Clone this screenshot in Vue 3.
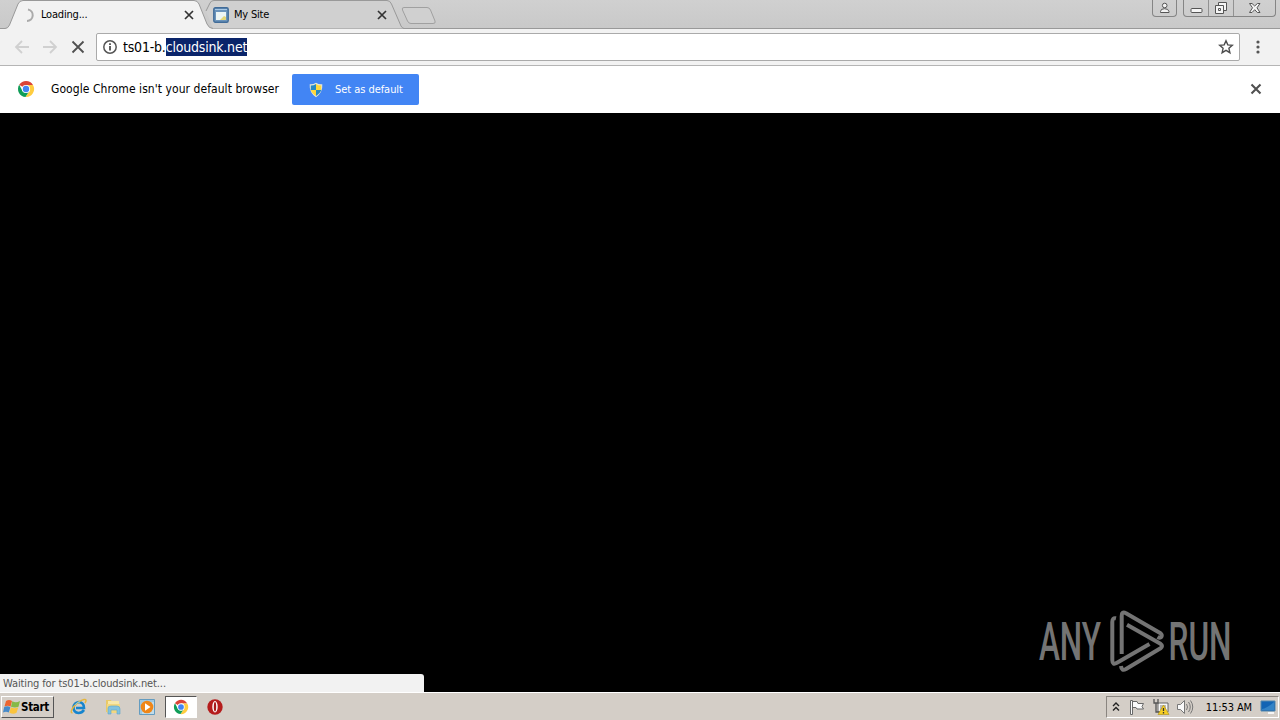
<template>
  <div class="desktop">
    <header class="tab-strip">
      <div class="tabs">
        <div class="tab active">
          <svg class="tab-shape" width="210" height="29" viewBox="0 0 210 29">
            <path d="M0 28.5H2Q5 28.5 6.5 25L15 4Q16.500 .5 20 .5H191Q194.500 .5 196 4L204 24Q206 28.500 210 28.500V29H0Z" fill="#f2f2f2" />
            <path d="M0 28.5H2Q5 28.5 6.500 25L15 4Q16.500 .5 20 .5H191Q194.500 .5 196 4L204 24Q206 28.500 210 28.500" fill="none" stroke="#999" />
          </svg>
          <svg class="tab-icon" width="16" height="16" viewBox="0 0 16 16">
            <path d="M8 2.500A5.800 5.800 0 0 1 7 14" fill="none" stroke="#aaa" stroke-width="2" />
          </svg>
          <span class="tab-title">Loading...</span>
          <svg class="tab-close" width="10" height="10" viewBox="0 0 10 10"><path d="M1 1L9 9M9 1L1 9" stroke="#333" stroke-width="1.700" /></svg>
        </div>
        <div class="tab">
          <svg class="tab-shape" width="210" height="29" viewBox="0 0 210 29">
            <path d="M7 11L11 3Q12 .5 15 .5H188Q191 .5 192.500 4L202 26Q203 28 205 28.500H14Z" fill="#d0d0d0" />
            <path d="M7 11L11 3Q12 .5 15 .5H188Q191 .5 192.500 4L202 26Q203 28 205 28.500" fill="none" stroke="#999" />
          </svg>
          <svg class="tab-icon" width="16" height="16" viewBox="0 0 16 16">
            <rect x=".8" y=".8" width="14.400" height="14.400" rx="1.500" fill="#6c94bb" stroke="#416c99" stroke-width="1.400" />
            <path d="M2 2.500H14" stroke="#a9c9e6" />
            <rect x="3" y="5" width="10" height="8" fill="#edf5f4" />
            <path d="M7 13L11 9L13 10V13Z" fill="#e5d778" />
          </svg>
          <span class="tab-title">My Site</span>
          <svg class="tab-close" width="10" height="10" viewBox="0 0 10 10"><path d="M1 1L9 9M9 1L1 9" stroke="#333" stroke-width="1.700" /></svg>
        </div>
        <svg class="new-tab" width="36" height="20" viewBox="0 0 36 20">
          <path d="M3 1.500H26Q28.500 1.500 29.500 4L34 15Q35 17.500 32 17.500H10Q7.500 17.500 6.500 15L1.500 4Q.5 1.500 3 1.500Z" fill="#d0d0d0" stroke="#a0a0a0" />
        </svg>
      </div>
      <div class="window-controls">
        <div class="control profile">
          <svg width="12" height="12" viewBox="0 0 12 12" fill="#f3f3f3" stroke="#555">
            <path d="M1.500 9.500Q1.500 6.700 5.500 6.700T10 9.500V10.500H1.500Z" /><circle cx="5.700" cy="3.500" r="2.300" />
          </svg>
        </div>
        <div class="control-group">
          <div class="control minimize">
            <svg width="13" height="12"><rect x="1" y="6.500" width="11" height="4" rx="1" fill="#f5f5f5" stroke="#555" /></svg>
          </div>
          <div class="control restore">
            <svg width="14" height="14" viewBox="0 0 14 14" fill="#f5f5f5" stroke="#555">
              <path d="M4.500 1.500H12.500V9.500H4.500Z" /><path d="M1.500 4.500H9.500V12.500H1.500Z" /><path d="M4.500 7.500H6.500V9.500H4.500Z" />
            </svg>
          </div>
          <div class="control close">
            <svg width="14" height="12" viewBox="0 0 14 12">
              <path d="M1.500 1.500H4L6.700 4L9.400 1.500H12L9 5.800L12 10.500H9.400L6.700 7.700L4 10.500H1.500L4.500 5.800Z" fill="#f5f5f5" stroke="#555" />
            </svg>
          </div>
        </div>
      </div>
    </header>

    <nav class="toolbar">
      <div class="nav-buttons">
        <svg width="16" height="16" viewBox="0 0 16 16" fill="none" stroke="#d0d0d0" stroke-width="1.800"><path d="M15 8H2M8 2L2 8L8 14" /></svg>
        <svg width="16" height="16" viewBox="0 0 16 16" fill="none" stroke="#d0d0d0" stroke-width="1.800"><path d="M1 8H14M8 2L14 8L8 14" /></svg>
        <svg width="16" height="16" viewBox="0 0 16 16" fill="none" stroke="#505050" stroke-width="1.800"><path d="M2.500 2.500L13.500 13.500M13.500 2.500L2.500 13.500" /></svg>
      </div>
      <div class="omnibox">
        <svg width="16" height="16" viewBox="0 0 16 16">
          <circle cx="8" cy="8" r="6.200" fill="none" stroke="#555" stroke-width="1.500" />
          <path d="M8 7V11.500M8 4.300V6" stroke="#444" stroke-width="1.700" />
        </svg>
        <span class="address">ts01-b.<span class="selection">cloudsink.net</span></span>
        <svg class="star" width="16" height="16" viewBox="0 0 16 16">
          <path d="M8 1.700L9.800 5.900L14.300 6.300L10.900 9.300L11.900 13.700L8 11.400L4.100 13.700L5.100 9.300L1.700 6.300L6.200 5.900Z" fill="none" stroke="#4d4d4d" stroke-width="1.400" />
        </svg>
      </div>
      <svg class="menu" width="4" height="16" viewBox="0 0 4 16" fill="#555"><circle cx="2" cy="3" r="1.600" /><circle cx="2" cy="8" r="1.600" /><circle cx="2" cy="13" r="1.600" /></svg>
    </nav>

    <section class="infobar">
      <svg width="18" height="18" viewBox="0 0 18 18">
        <path d="M9 9L2.200 4.800A8 8 0 0 1 16 5H9Z" fill="#db4437" />
        <path d="M9 5H16A8 8 0 0 1 8.500 17L12.500 11Z" fill="#ffcd40" />
        <path d="M2.200 4.800A8 8 0 0 0 8.500 17L12 11.500L9 13L5.500 11Z" fill="#0f9d58" />
        <circle cx="9" cy="9" r="4.100" fill="#fff" /><circle cx="9" cy="9" r="3.200" fill="#4285f4" />
      </svg>
      <span class="infobar-message">Google Chrome isn't your default browser</span>
      <button class="default-button">
        <svg width="14" height="16" viewBox="0 0 14 16">
          <path d="M7 .7Q10 2.700 13.300 2.300Q14 10.500 7 15.300Q0 10.500 .7 2.300Q4 2.700 7 .7Z" fill="#e6e6d6" />
          <path d="M7 2Q4.500 3.700 1.800 3.600V8H7Z" fill="#278ac4" /><path d="M7 2Q9.500 3.700 12.200 3.600V8H7Z" fill="#ffd83b" />
          <path d="M1.800 8H7V14Q2.500 11 1.800 8Z" fill="#ffd83b" /><path d="M12.200 8H7V14Q11.500 11 12.200 8Z" fill="#278ac4" />
        </svg>
        <span>Set as default</span>
      </button>
      <svg class="infobar-close" width="12" height="12" viewBox="0 0 12 12"><path d="M1.500 1.500L10.500 10.500M10.500 1.500L1.500 10.500" stroke="#505050" stroke-width="2.100" /></svg>
    </section>

    <main class="page">
      <div class="watermark">
        <svg width="196" height="64" viewBox="0 0 196 64">
          <text x="1" y="50" textLength="62" lengthAdjust="spacingAndGlyphs">ANY</text>
          <text x="130.500" y="50" textLength="63" lengthAdjust="spacingAndGlyphs">RUN</text>
          <g class="watermark-logo">
            <path d="M78 8.300Q74.300 7.500 74.300 12V50Q74.300 55.500 79 52.800L111.500 34" />
            <path d="M83.700 44V6Q83.700 1 88 3.200L122.500 23.300Q124.500 25 123.300 27Q122 28.500 119.500 27" />
            <path d="M89 14.800L122.500 33.800Q125.500 36 122.500 38.300L88 59Q83.500 61.500 83 56" />
          </g>
        </svg>
      </div>
      <div class="status-bubble"><span>Waiting for ts01-b.cloudsink.net...</span></div>
    </main>

    <footer class="taskbar">
      <button class="start-button">
        <svg width="18" height="16" viewBox="0 0 18 16">
          <path d="M3 2Q6-.2 9 2L7.500 7.700Q5 6 1.500 7.500Z" fill="#ec6530" /><path d="M9.300 2.300Q13 4.200 17 2L15.500 7.700Q12 9.300 8 7.700Z" fill="#86b947" />
          <path d="M1.200 8Q4.500 6.400 7.400 8.200L5.800 13.500Q3 11.800 0 13.500Z" fill="#468ac9" /><path d="M7.900 8.300Q11.500 10.200 15.300 8.200L13.500 13.800Q10.500 15.800 6.400 13.800Z" fill="#fac43d" />
        </svg>
        <span>Start</span>
      </button>
      <div class="quick-launch">
        <div class="launch">
          <svg width="18" height="18" viewBox="0 0 18 18">
            <path d="M14 12Q12 15 8.500 15Q3.500 14.500 3.500 9.500Q4 4.500 9 4Q14 4.500 14 10H6" fill="none" stroke="#1685ce" stroke-width="2.600" />
            <path d="M2.500 15Q-.5 14.500 3.500 9Q9 2.500 14 1.500Q17.500 1 15 5" fill="none" stroke="#e5b63d" stroke-width="1.500" />
            <path d="M5 7Q7 4 10 4" fill="none" stroke="#73c8ed" />
          </svg>
        </div>
        <div class="launch">
          <svg width="18" height="18" viewBox="0 0 18 18">
            <path d="M2 2H7L8 4H15V14H2Z" fill="#e9c967" /><path d="M4 3H15V10H4Z" fill="#f8e8a9" />
            <path d="M3 6H16V15H3Z" fill="#f3d77f" /><path d="M4 16V10Q4 8 7 8H13Q16 8 16 11V16H13V12H7V16Z" fill="#82c2df" stroke="#5ba5c9" stroke-width=".6" />
          </svg>
        </div>
        <div class="launch">
          <svg width="18" height="18" viewBox="0 0 18 18">
            <path d="M1.500 1.500H16.500V16.500H1.500Z" fill="#9fc8e2" stroke="#649cc0" /><path d="M4 4H16V16H4Z" fill="#c1dcea" />
            <circle cx="9" cy="9" r="6.300" fill="#ef8618" /><path d="M7 5.200L12.500 9L7 12.800Z" fill="#fff" />
          </svg>
        </div>
        <div class="launch running">
          <svg width="16" height="16" viewBox="0 0 18 18">
            <path d="M9 9L2.200 4.800A8 8 0 0 1 16 5H9Z" fill="#db4437" /><path d="M9 5H16A8 8 0 0 1 8.500 17L12.500 11Z" fill="#ffcd40" />
            <path d="M2.200 4.800A8 8 0 0 0 8.500 17L12 11.500L9 13L5.500 11Z" fill="#0f9d58" />
            <circle cx="9" cy="9" r="4.100" fill="#fff" /><circle cx="9" cy="9" r="3.200" fill="#4285f4" />
          </svg>
        </div>
        <div class="launch">
          <svg width="18" height="18" viewBox="0 0 18 18"><circle cx="9" cy="9" r="7.700" fill="#b51c1c" /><ellipse cx="9" cy="8.700" rx="2.700" ry="5.700" fill="#fff" /><ellipse cx="9" cy="8.700" rx="1.200" ry="4.700" fill="#a91919" /></svg>
        </div>
      </div>
      <div class="tray">
        <svg class="tray-expand" width="8" height="10" viewBox="0 0 8 10" fill="none" stroke="#222" stroke-width="1.400"><path d="M1 4L4 1L7 4M1 8.500L4 5.500L7 8.500" /></svg>
        <svg class="tray-flag" width="16" height="16" viewBox="0 0 16 16"><path d="M1.500 15.500V1.500H3.500V15.500ZM3.500 2.500H8L9 4.500H14.500L13 7.500L14.500 10H8L7 8.500H3.500Z" fill="#fafafa" stroke="#696969" /></svg>
        <svg class="tray-network" width="18" height="18" viewBox="0 0 18 18">
          <path d="M6 5H16V14H6Z" fill="#f7f7f7" stroke="#666" /><path d="M8 7H14V12H8Z" fill="#bbb" />
          <path d="M2 1V5H6V1M4 5V14H9" fill="none" stroke="#555" stroke-width="1.300" />
          <path d="M11.500 7L17 16.500H6Z" fill="#f7ce22" stroke="#b29620" stroke-width=".7" /><path d="M11.500 10V13M11.500 14V15.500" stroke="#333" stroke-width="1.300" />
        </svg>
        <svg class="tray-volume" width="18" height="16" viewBox="0 0 18 16" fill="#fafafa" stroke="#777"><path d="M1.500 5.500H4.500L8.500 1.500V14.500L4.500 10.500H1.500Z" /><path d="M10.500 5Q12.500 8 10.500 11M12.500 3Q16 8 12.500 13M14.500 1.500Q19 8 14.500 14.500" fill="none" /></svg>
        <span class="clock">11:53 AM</span>
        <svg class="tray-desktop" width="16" height="14" viewBox="0 0 16 14"><path d="M1 1H15V11H1Z" fill="#1264b4" stroke="#5387ad" /><path d="M2 9Q7 8 14 2V10H2Z" fill="#3383c6" /><path d="M8 13H14" stroke="#f5f5f5" stroke-width="2" /></svg>
      </div>
    </footer>
  </div>
</template>

<script setup>
</script>

<style>
body {
  margin: 0;
  overflow: hidden;
}
</style>

<style scoped>
.desktop {
  width: 1280px;
  height: 720px;
  display: flex;
  flex-direction: column;
  font-family: "DejaVu Sans Condensed", "DejaVu Sans", sans-serif;
  font-stretch: condensed;
  font-size: 11px;
  color: #000;
  white-space: nowrap;
}

svg {
  display: block;
  flex-shrink: 0;
  overflow: visible;
}

button {
  font: inherit;
}

.tab-strip {
  height: 28px;
  flex-shrink: 0;
  display: flex;
  justify-content: space-between;
  background: linear-gradient(#d0d0d0, #c9c9c9);
  border-bottom: 1px solid #999;
}

.tabs {
  display: flex;
}

.tab {
  width: 193px;
  height: 29px;
  position: relative;
  display: flex;
  align-items: center;
  box-sizing: border-box;
  padding-left: 14px;
}

.active {
  width: 199px;
  padding-left: 20px;
  z-index: 1;
}

.tab-shape {
  position: absolute;
  left: 0;
  top: 0;
}

.active .tab-shape {
  left: 3px;
}

.tab-icon,
.tab-title,
.tab-close {
  position: relative;
}

.tab-title {
  margin-left: 5px;
  line-height: 16px;
  letter-spacing: -0.2px;
}

.tab-close {
  margin: 1px 5px 0 auto;
}

.new-tab {
  margin: 6px 0 0 9px;
}

.window-controls {
  display: flex;
  gap: 6px;
  padding-right: 4px;
  height: 17px;
}

.control-group {
  display: flex;
  width: 93px;
  box-sizing: border-box;
  border: 1px solid #858585;
  border-top: 0;
  border-radius: 0 0 4px 4px;
}

.control {
  display: flex;
  align-items: center;
  justify-content: center;
  box-sizing: border-box;
}

.profile {
  width: 25px;
  border: 1px solid #858585;
  border-top: 0;
  border-radius: 0 0 4px 4px;
}

.minimize,
.restore {
  width: 25px;
  border-right: 1px solid #929292;
}

.close {
  width: 41px;
}

.toolbar {
  height: 36px;
  flex-shrink: 0;
  display: flex;
  align-items: center;
  background: #f2f2f2;
  border-bottom: 1px solid #b5b5b5;
}

.nav-buttons {
  width: 96px;
  display: flex;
  gap: 12px;
  padding-left: 14px;
  box-sizing: border-box;
}

.omnibox {
  width: 1144px;
  height: 28px;
  box-sizing: border-box;
  display: flex;
  align-items: center;
  padding: 0 5px;
  border: 1px solid #aaa;
  border-radius: 2px;
  background: #fff;
}

.address {
  margin-left: 5px;
  font-size: 14px;
  line-height: 18px;
  letter-spacing: -0.2px;
}

.selection {
  display: inline-block;
  color: #fff;
  background: #0a246a;
}

.star {
  margin-left: auto;
}

.menu {
  margin-left: 16px;
}

.infobar {
  height: 47px;
  flex-shrink: 0;
  display: flex;
  align-items: center;
  padding: 0 18px 1px 17px;
  box-sizing: border-box;
  background: #fff;
}

.infobar-message {
  width: 228px;
  margin-left: 16px;
  font-size: 12px;
  letter-spacing: 0.06px;
}

.default-button {
  width: 127px;
  height: 31px;
  margin: 1px 0 0 13px;
  padding: 0 0 0 17px;
  display: flex;
  align-items: center;
  gap: 12px;
  border: 0;
  border-radius: 2px;
  background: #4285f4;
  color: #fff;
  letter-spacing: -0.05px;
}

.infobar-close {
  margin-left: auto;
}

.page {
  flex: 1;
  min-height: 0;
  position: relative;
  background: #000;
}

.watermark {
  position: absolute;
  right: 46px;
  bottom: 18px;
  font-family: Roboto, "Liberation Sans", sans-serif;
  font-size: 53px;
  font-stretch: normal;
  font-weight: 500;
  fill: #747474;
}

.watermark-logo {
  fill: none;
  stroke: #747474;
  stroke-width: 4;
  stroke-linejoin: round;
}

.status-bubble {
  position: absolute;
  left: 0;
  bottom: 0;
  width: 424px;
  height: 18px;
  padding-left: 3px;
  box-sizing: border-box;
  border-radius: 0 3px 0 0;
  background: #f2f2f2;
  color: #555;
  line-height: 19px;
  letter-spacing: -0.12px;
}

.taskbar {
  height: 28px;
  flex-shrink: 0;
  display: flex;
  align-items: center;
  padding: 1px 1px 0;
  border-top: 1px solid #fff;
  box-sizing: border-box;
  background: #d4cec7;
}

.start-button {
  width: 53px;
  height: 22px;
  display: flex;
  align-items: center;
  gap: 0;
  padding: 0 1px;
  border: 1px solid;
  border-color: #fff #555 #555 #fff;
  background: #d4cec7;
  color: #000;
  font-size: 11.5px;
  font-weight: bold;
  letter-spacing: -0.3px;
}

.quick-launch {
  display: flex;
  align-items: center;
  gap: 2px;
  margin-left: 9px;
}

.launch {
  width: 32px;
  height: 22px;
  display: flex;
  align-items: center;
  justify-content: center;
  box-sizing: border-box;
}

.running {
  border: 1px solid;
  border-color: #555 #fff #fff #555;
  background: #fff;
}

.tray {
  width: 173px;
  height: 22px;
  margin-left: auto;
  display: flex;
  align-items: center;
  padding: 0 2px 0 5px;
  box-sizing: border-box;
  border: 1px solid;
  border-color: #8a8580 #fff #fff #8a8580;
}

.tray-flag {
  margin-left: 9px;
}

.tray-network {
  margin-left: 7px;
}

.tray-volume {
  margin-left: 6px;
}

.clock {
  margin-left: auto;
  letter-spacing: -0.1px;
}

.tray-desktop {
  margin-left: 8px;
}
</style>
